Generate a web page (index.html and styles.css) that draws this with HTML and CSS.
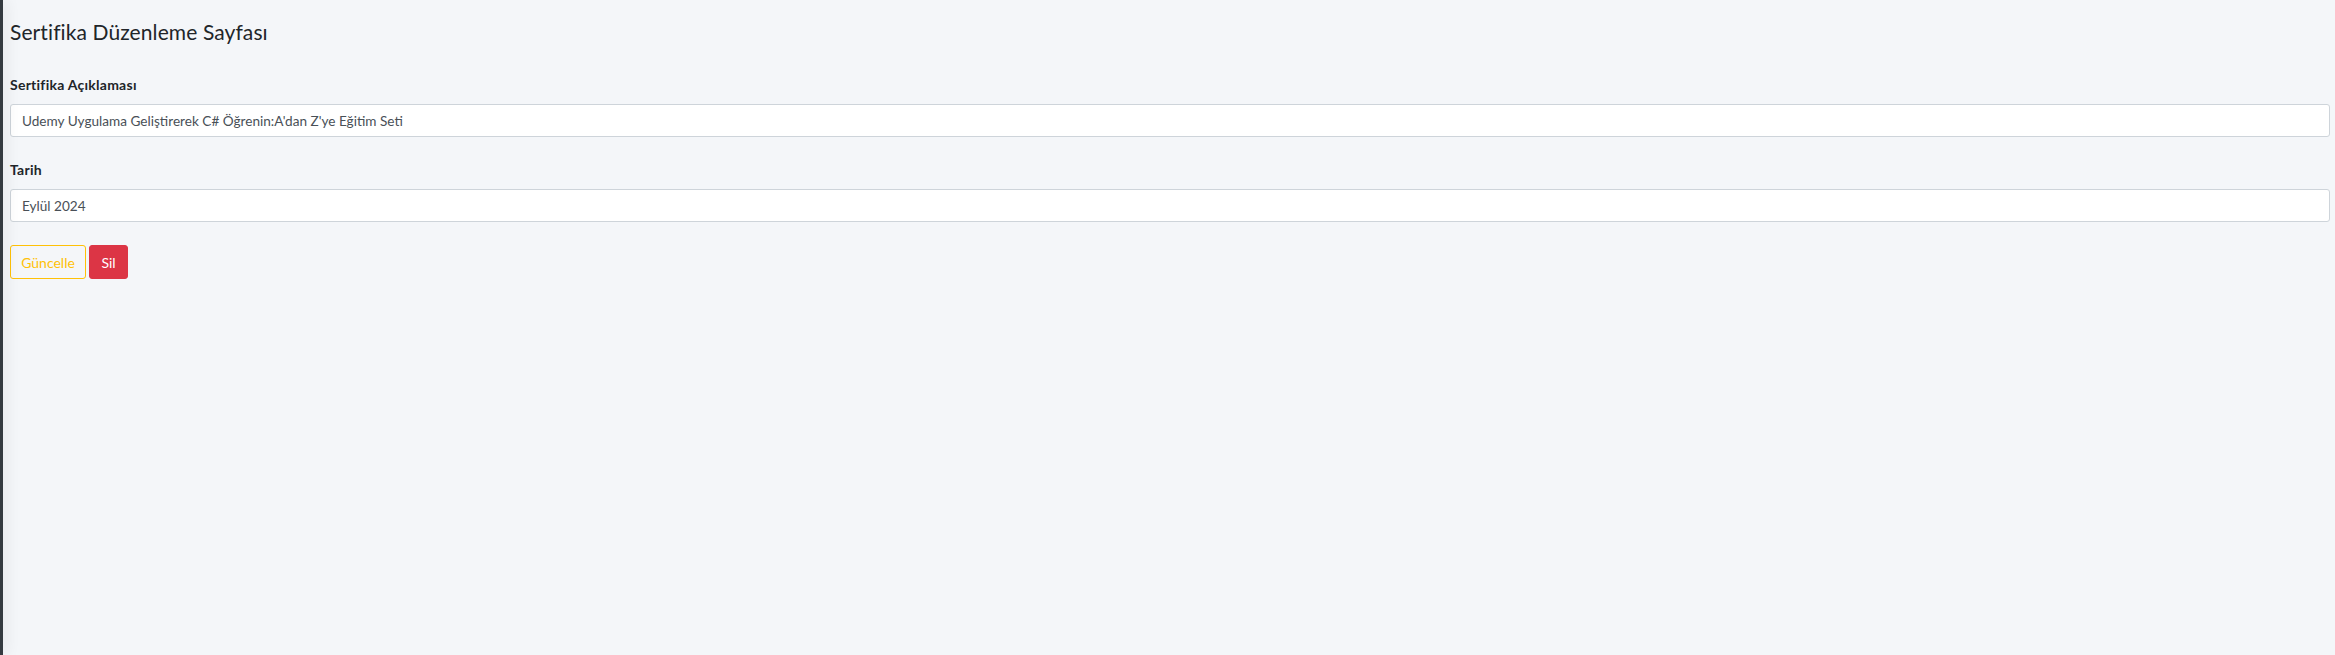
FILE: index.html
```html
<!DOCTYPE html>
<html lang="tr">
<head>
<meta charset="utf-8">
<title>Sertifika Düzenleme Sayfası</title>
<link rel="stylesheet" href="styles.css">
</head>
<body>
<div class="layout">
  <aside class="sidebar"></aside>
  <main class="content">
    <h1 class="page-title">Sertifika Düzenleme Sayfası</h1>
    <form class="form">
      <div class="field">
        <label class="field-label">Sertifika Açıklaması</label>
        <input class="field-input" type="text" value="Udemy Uygulama Geliştirerek C# Öğrenin:A'dan Z'ye Eğitim Seti">
      </div>
      <div class="field">
        <label class="field-label">Tarih</label>
        <input class="field-input" type="text" value="Eylül 2024">
      </div>
      <div class="actions">
        <button type="button" class="btn btn-warning-outline">Güncelle</button>
        <button type="button" class="btn btn-danger">Sil</button>
      </div>
    </form>
  </main>
</div>
</body>
</html>
```
FILE: styles.css
```css
* { box-sizing: border-box; }
html, body { margin: 0; height: 100%; }
body {
  background: #f4f6f9;
  font-family: "Lato", "Open Sans", sans-serif;
  color: #212529;
}
.layout {
  display: flex;
  min-height: 655px;
}
.sidebar {
  width: 3px;
  flex: 0 0 3px;
  background: #343a40;
  box-shadow: 2px 0 14px rgba(0, 0, 0, 0.18);
  position: relative;
  z-index: 1;
}
.content {
  flex: 1;
  padding: 19px 5px 0 7px;
}
.page-title {
  margin: 0;
  font-size: 21px;
  line-height: 26px;
  font-weight: 400;
  letter-spacing: 0.1px;
  color: #212529;
}
.form {
  margin-top: 32px;
  display: flex;
  flex-direction: column;
}
.field {
  display: flex;
  flex-direction: column;
  margin-bottom: 25px;
}
.field-label {
  font-size: 14px;
  line-height: 16px;
  font-weight: 700;
  letter-spacing: 0.25px;
  margin-bottom: 11px;
}
.field-input {
  height: 33px;
  border: 1px solid #ced4da;
  border-radius: 3px;
  background: #fff;
  padding: 0 11px;
  font-family: inherit;
  font-size: 13.6px;
  color: #495057;
  outline: none;
}
.actions {
  display: flex;
  gap: 3px;
  margin-top: -2px;
}
.btn {
  height: 34px;
  border-radius: 3px;
  font-family: inherit;
  font-size: 14px;
  padding: 0;
  cursor: pointer;
}
.btn-warning-outline {
  background: transparent;
  border: 1px solid #ffc107;
  color: #ffc107;
  width: 76px;
}
.btn-danger {
  background: #dc3545;
  border: 1px solid #dc3545;
  color: #fff;
  width: 39px;
}
```
